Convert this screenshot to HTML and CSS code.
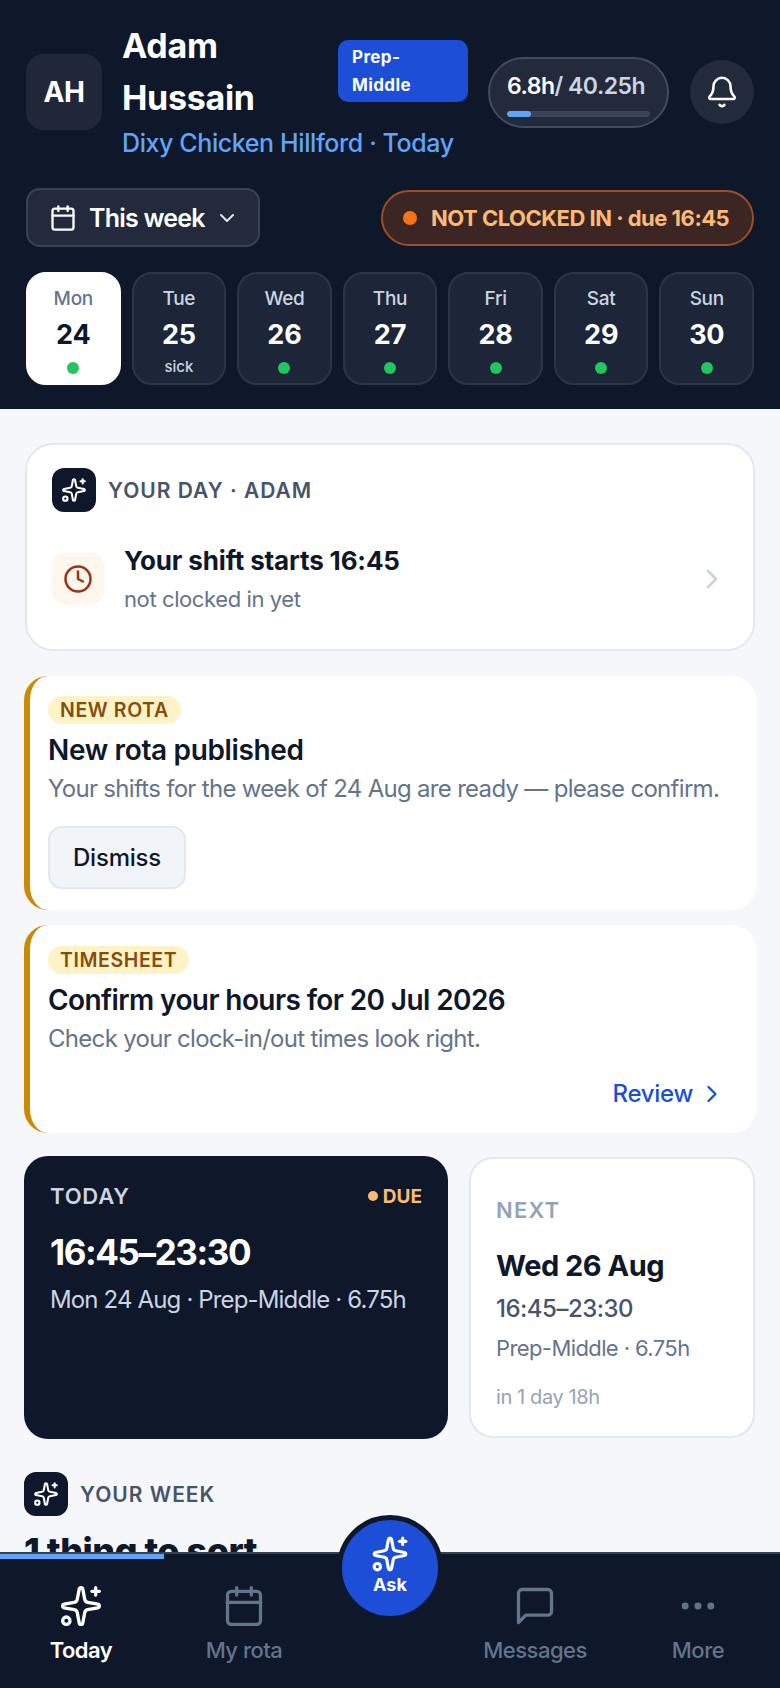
FILE: index.html
```html
<!DOCTYPE html>
<html lang="en">
<head>
  <meta charset="UTF-8">
  <meta name="viewport" content="width=device-width, initial-scale=1.0">
  <title>Today</title>
  <link rel="stylesheet" href="styles.css">
</head>
<body>

<svg class="defs" width="0" height="0" aria-hidden="true">
  <symbol id="i-sparkles" viewBox="0 0 24 24">
    <path d="M11.017 2.814a1 1 0 0 1 1.966 0l1.051 5.558a2 2 0 0 0 1.594 1.594l5.558 1.051a1 1 0 0 1 0 1.966l-5.558 1.051a2 2 0 0 0-1.594 1.594l-1.051 5.558a1 1 0 0 1-1.966 0l-1.051-5.558a2 2 0 0 0-1.594-1.594l-5.558-1.051a1 1 0 0 1 0-1.966l5.558-1.051a2 2 0 0 0 1.594-1.594z"/>
    <path d="M20 2v4"/><path d="M22 4h-4"/><circle cx="4" cy="20" r="2"/>
  </symbol>
  <symbol id="i-calendar" viewBox="0 0 24 24">
    <path d="M8 2v4"/><path d="M16 2v4"/><rect x="3" y="4" width="18" height="18" rx="2"/><path d="M3 10h18"/>
  </symbol>
  <symbol id="i-bell" viewBox="0 0 24 24">
    <path d="M10.268 21a2 2 0 0 0 3.464 0"/>
    <path d="M3.262 15.326A1 1 0 0 0 4 17h16a1 1 0 0 0 .74-1.673C19.41 13.956 18 12.499 18 8A6 6 0 0 0 6 8c0 4.499-1.411 5.956-2.738 7.326"/>
  </symbol>
  <symbol id="i-clock" viewBox="0 0 24 24"><circle cx="12" cy="12" r="10"/><path d="M12 6v6l4 2"/></symbol>
  <symbol id="i-down" viewBox="0 0 24 24"><path d="m6 9 6 6 6-6"/></symbol>
  <symbol id="i-right" viewBox="0 0 24 24"><path d="m9 18 6-6-6-6"/></symbol>
  <symbol id="i-message" viewBox="0 0 24 24"><path d="M21 15a2 2 0 0 1-2 2H7l-4 4V5a2 2 0 0 1 2-2h14a2 2 0 0 1 2 2z"/></symbol>
  <symbol id="i-more" viewBox="0 0 24 24"><circle cx="12" cy="12" r="1"/><circle cx="19" cy="12" r="1"/><circle cx="5" cy="12" r="1"/></symbol>
</svg>

<div class="app">
  <header class="top">
    <div class="top-row">
      <div class="avatar">AH</div>
      <div class="who">
        <div class="who-line">
          <div class="name">Adam Hussain</div>
          <div class="role">Prep-Middle</div>
        </div>
        <div class="place">Dixy Chicken Hillford · Today</div>
      </div>
      <div class="hours">
        <div class="hours-text"><b>6.8h</b>/ 40.25h</div>
        <div class="hours-bar"><div class="hours-fill" style="width: 17%"></div></div>
      </div>
      <div class="bell"><svg class="icon"><use href="#i-bell"/></svg></div>
    </div>

    <div class="filter-row">
      <button type="button" class="week-btn">
        <svg class="icon icon-cal"><use href="#i-calendar"/></svg>
        <span>This week</span>
        <svg class="icon icon-down"><use href="#i-down"/></svg>
      </button>
      <div class="clock-state"><span class="clock-dot"></span>NOT CLOCKED IN · due 16:45</div>
    </div>

    <div class="days">
      <div class="day active"><span class="day-name">Mon</span><span class="day-num">24</span><span class="dot"></span></div>
      <div class="day"><span class="day-name">Tue</span><span class="day-num">25</span><span class="day-note">sick</span></div>
      <div class="day"><span class="day-name">Wed</span><span class="day-num">26</span><span class="dot"></span></div>
      <div class="day"><span class="day-name">Thu</span><span class="day-num">27</span><span class="dot"></span></div>
      <div class="day"><span class="day-name">Fri</span><span class="day-num">28</span><span class="dot"></span></div>
      <div class="day"><span class="day-name">Sat</span><span class="day-num">29</span><span class="dot"></span></div>
      <div class="day"><span class="day-name">Sun</span><span class="day-num">30</span><span class="dot"></span></div>
    </div>
  </header>

  <main class="content">
    <section class="card day-card">
      <div class="ai-head">
        <div class="ai-tile"><svg class="icon"><use href="#i-sparkles"/></svg></div>
        <span class="ai-label">YOUR DAY · ADAM</span>
      </div>
      <div class="day-row">
        <div class="clock-tile"><svg class="icon"><use href="#i-clock"/></svg></div>
        <div class="day-row-text">
          <div class="day-row-title">Your shift starts 16:45</div>
          <div class="day-row-sub">not clocked in yet</div>
        </div>
        <svg class="icon icon-go"><use href="#i-right"/></svg>
      </div>
    </section>

    <section class="notice">
      <span class="tag">NEW ROTA</span>
      <h2 class="notice-title">New rota published</h2>
      <p class="notice-text">Your shifts for the week of 24 Aug are ready — please confirm.</p>
      <button type="button" class="dismiss">Dismiss</button>
    </section>

    <section class="notice notice-second">
      <span class="tag">TIMESHEET</span>
      <h2 class="notice-title">Confirm your hours for 20 Jul 2026</h2>
      <p class="notice-text">Check your clock-in/out times look right.</p>
      <a class="review">Review <svg class="icon"><use href="#i-right"/></svg></a>
    </section>

    <div class="shifts">
      <section class="shift-today">
        <div class="shift-head">
          <span class="shift-label">TODAY</span>
          <span class="due"><i></i>DUE</span>
        </div>
        <div class="shift-time">16:45–23:30</div>
        <div class="shift-meta">Mon 24 Aug · Prep-Middle · 6.75h</div>
      </section>
      <section class="card shift-next">
        <div class="next-label">NEXT</div>
        <div class="next-date">Wed 26 Aug</div>
        <div class="next-time">16:45–23:30</div>
        <div class="next-meta">Prep-Middle · 6.75h</div>
        <div class="next-in">in 1 day 18h</div>
      </section>
    </div>

    <section class="week">
      <div class="ai-head">
        <div class="ai-tile"><svg class="icon"><use href="#i-sparkles"/></svg></div>
        <span class="ai-label">YOUR WEEK</span>
      </div>
      <h2 class="week-title">1 thing to sort</h2>
    </section>
  </main>

  <nav class="tabbar">
    <div class="tabbar-progress"></div>
    <a class="tab current"><svg class="icon"><use href="#i-sparkles"/></svg><span>Today</span></a>
    <a class="tab"><svg class="icon"><use href="#i-calendar"/></svg><span>My rota</span></a>
    <div class="tab-gap"></div>
    <a class="tab"><svg class="icon"><use href="#i-message"/></svg><span>Messages</span></a>
    <a class="tab"><svg class="icon"><use href="#i-more"/></svg><span>More</span></a>
    <button type="button" class="ask">
      <svg class="icon"><use href="#i-sparkles"/></svg>
      <span>Ask</span>
    </button>
  </nav>
</div>

</body>
</html>
```

FILE: styles.css
```css
* {
  box-sizing: border-box;
}

body {
  margin: 0;
  font-family: Inter, "Open Sans", sans-serif;
  background-color: #f5f7fb;
  color: #0f172a;
}

button {
  font-family: inherit;
}

.defs {
  position: absolute;
}

.icon {
  display: block;
  fill: none;
  stroke: currentColor;
  stroke-width: 2;
  stroke-linecap: round;
  stroke-linejoin: round;
}

.app {
  display: flex;
  flex-direction: column;
  height: 1688px;
  overflow: hidden;
}

/* header */
.top {
  flex: none;
  height: 409px;
  padding: 19px 26px 0;
  background-color: #0f172a;
  color: #fff;
}

.top-row {
  display: flex;
  align-items: center;
  gap: 20px;
}

.avatar {
  flex: none;
  display: flex;
  align-items: center;
  justify-content: center;
  width: 76px;
  height: 76px;
  margin-top: 4px;
  border-radius: 18px;
  background-color: #1f2738;
  font-size: 28px;
  font-weight: 700;
  letter-spacing: -0.5px;
}

.who {
  flex: 1;
  min-width: 0;
}

.who-line {
  display: flex;
  align-items: center;
}

.name {
  flex: 1;
  margin: 1px 0 -1px;
  padding-right: 60px;
  font-size: 34px;
  line-height: 52px;
  font-weight: 700;
  letter-spacing: -0.3px;
}

.role {
  flex: none;
  width: 130px;
  height: 62px;
  padding: 3px 30px 0 14px;
  border-radius: 10px;
  background-color: #1d4ed8;
  font-size: 17px;
  line-height: 28px;
  font-weight: 700;
  letter-spacing: 0.4px;
}

.place {
  margin-top: 2px;
  font-size: 25px;
  line-height: 36px;
  font-weight: 500;
  letter-spacing: -0.4px;
  color: #60a5fa;
  white-space: nowrap;
}

.hours {
  flex: none;
  width: 181px;
  height: 71px;
  margin-top: 4px;
  padding: 12px 17px 0;
  border: 2px solid #434c5c;
  border-radius: 36px;
  background-color: #222a3b;
}

.hours-text {
  font-size: 23px;
  line-height: 30px;
  font-weight: 600;
  letter-spacing: -0.5px;
  color: #cbd5e1;
  white-space: nowrap;
}

.hours-text b {
  font-weight: 600;
  color: #fff;
}

.hours-bar {
  height: 6px;
  margin-top: 10px;
  border-radius: 3px;
  background-color: #3a4456;
  overflow: hidden;
}

.hours-fill {
  height: 100%;
  border-radius: 3px;
  background-color: #60a5fa;
}

.bell {
  flex: none;
  display: flex;
  align-items: center;
  justify-content: center;
  width: 64px;
  height: 64px;
  margin-top: 4px;
  margin-left: 1px;
  border-radius: 50%;
  background-color: #222a3b;
}

.bell .icon {
  width: 34px;
  height: 34px;
  stroke-width: 1.8;
}

.filter-row {
  display: flex;
  align-items: center;
  justify-content: space-between;
  margin-top: 27px;
}

.week-btn {
  display: flex;
  align-items: center;
  width: 234px;
  height: 59px;
  padding: 0 0 0 21px;
  border: 2px solid #3a4352;
  border-radius: 14px;
  background-color: #222a3b;
  color: #fff;
  font-size: 25px;
  font-weight: 600;
  letter-spacing: -0.8px;
}

.icon-cal {
  width: 28px;
  height: 28px;
  margin-right: 12px;
}

.icon-down {
  width: 24px;
  height: 24px;
  margin-left: 10px;
  color: #e2e8f0;
}

.clock-state {
  display: flex;
  align-items: center;
  width: 373px;
  height: 56px;
  padding-left: 20px;
  border: 2px solid #9a4f24;
  border-radius: 28px;
  background-color: #3b2624;
  color: #fdba74;
  font-size: 22px;
  font-weight: 700;
  letter-spacing: -0.5px;
  white-space: nowrap;
}

.clock-dot {
  width: 14px;
  height: 14px;
  margin-right: 14px;
  border-radius: 50%;
  background-color: #f97316;
}

.days {
  display: flex;
  gap: 11px;
  margin-top: 25px;
}

.day {
  flex: 1;
  display: flex;
  flex-direction: column;
  align-items: center;
  height: 113px;
  padding-top: 12px;
  border: 2px solid #2c3547;
  border-radius: 20px;
  background-color: #1d2538;
  text-align: center;
}

.day-name {
  font-size: 19px;
  line-height: 26px;
  font-weight: 500;
  letter-spacing: -0.3px;
  color: #cbd5e1;
}

.day-num {
  margin-top: 5px;
  font-size: 27px;
  line-height: 36px;
  font-weight: 700;
  letter-spacing: -0.2px;
}

.dot {
  width: 12px;
  height: 12px;
  margin-top: 9px;
  border-radius: 50%;
  background-color: #22c55e;
}

.day-note {
  margin-top: 4px;
  font-size: 15px;
  line-height: 20px;
  font-weight: 500;
  color: #cbd5e1;
}

.day.active {
  border-color: #fff;
  background-color: #fff;
  color: #0f172a;
}

.day.active .day-name {
  color: #64748b;
}

/* body */
.content {
  flex: 1;
  min-height: 0;
  padding: 34px 24px 0;
  overflow: hidden;
}

.card {
  border: 2px solid #e2e8f0;
  background-color: #fff;
}

.day-card {
  height: 208px;
  margin: 0 1px;
  padding: 23px 25px 0;
  border-radius: 28px;
}

.ai-head {
  display: flex;
  align-items: center;
  gap: 12px;
}

.ai-tile {
  flex: none;
  display: flex;
  align-items: center;
  justify-content: center;
  width: 44px;
  height: 44px;
  border-radius: 12px;
  background-color: #0f172a;
  color: #fff;
}

.ai-tile .icon {
  width: 26px;
  height: 26px;
  stroke-width: 1.9;
}

.ai-label {
  font-size: 21px;
  font-weight: 600;
  letter-spacing: 1px;
  color: #475569;
}

.day-row {
  display: flex;
  align-items: center;
  margin-top: 31px;
}

.clock-tile {
  flex: none;
  display: flex;
  align-items: center;
  justify-content: center;
  width: 52px;
  height: 52px;
  margin-right: 20px;
  border-radius: 14px;
  background-color: #fff7ed;
  color: #9a3412;
}

.clock-tile .icon {
  width: 30px;
  height: 30px;
}

.day-row-title {
  font-size: 26px;
  line-height: 36px;
  font-weight: 700;
  letter-spacing: -0.15px;
}

.day-row-text {
  flex: 1;
}

.day-row-sub {
  margin-top: 4px;
  font-size: 22px;
  line-height: 32px;
  letter-spacing: -0.4px;
  color: #64748b;
}

.icon-go {
  flex: none;
  width: 32px;
  height: 32px;
  color: #cbd5e1;
}

.notice {
  height: 234px;
  margin-top: 25px;
  padding: 20px 30px 0 18px;
  border-left: 6px solid #ca8a04;
  border-radius: 24px;
  background-color: #fff;
}

.notice-second {
  height: 208px;
  margin-top: 15px;
  padding-top: 21px;
}

.tag {
  display: block;
  width: fit-content;
  height: 28px;
  padding: 0 12px;
  border-radius: 14px;
  background-color: #fef3c7;
  color: #854d0e;
  font-size: 19.5px;
  line-height: 28px;
  font-weight: 600;
  letter-spacing: 0.6px;
}

.notice-title {
  margin: 8px 0 0;
  font-size: 28px;
  line-height: 36px;
  font-weight: 600;
  letter-spacing: -0.35px;
}

.notice-second .notice-title {
  letter-spacing: -0.6px;
}

.notice-text {
  margin: 4px 0 0;
  font-size: 24px;
  line-height: 34px;
  letter-spacing: -0.7px;
  color: #64748b;
  white-space: nowrap;
}

.dismiss {
  display: block;
  width: 138px;
  height: 63px;
  margin-top: 20px;
  border: 2px solid #e2e8f0;
  border-radius: 14px;
  background-color: #f1f5f9;
  color: #0f172a;
  font-size: 24px;
  font-weight: 500;
  letter-spacing: -0.2px;
}

.review {
  display: flex;
  align-items: center;
  justify-content: flex-end;
  gap: 5px;
  margin-top: 20px;
  color: #1d4ed8;
  font-size: 24px;
  line-height: 36px;
  font-weight: 500;
  letter-spacing: -0.3px;
}

.review .icon {
  width: 28px;
  height: 28px;
}

.shifts {
  display: grid;
  grid-template-columns: 424px 1fr;
  gap: 21px;
  margin-top: 23px;
}

.shift-today {
  height: 283px;
  padding: 26px 26px 0;
  border-radius: 24px;
  background-color: #0f172a;
  color: #fff;
}

.shift-head {
  display: flex;
  align-items: center;
  justify-content: space-between;
}

.shift-label {
  font-size: 22px;
  line-height: 28px;
  font-weight: 600;
  letter-spacing: 0.8px;
  color: #cbd5e1;
}

.due {
  display: flex;
  align-items: center;
  gap: 5px;
  font-size: 19px;
  font-weight: 700;
  color: #fdba74;
}

.due i {
  width: 10px;
  height: 10px;
  border-radius: 50%;
  background-color: #fdba74;
}

.shift-time {
  margin-top: 20px;
  font-size: 35px;
  line-height: 44px;
  font-weight: 700;
  letter-spacing: -1.4px;
}

.shift-meta {
  margin-top: 9px;
  font-size: 24px;
  line-height: 34px;
  letter-spacing: -0.85px;
  color: #cbd5e1;
}

.shift-next {
  height: 281px;
  margin: 1px 1px 0 0;
  padding: 37px 20px 0 25px;
  border-radius: 24px;
}

.next-label {
  font-size: 22px;
  line-height: 28px;
  font-weight: 600;
  letter-spacing: 1.2px;
  color: #94a3b8;
}

.next-date {
  margin-top: 22px;
  font-size: 29px;
  line-height: 40px;
  font-weight: 700;
  letter-spacing: -0.5px;
}

.next-time {
  margin-top: 6px;
  font-size: 24px;
  line-height: 34px;
  font-weight: 500;
  letter-spacing: -0.5px;
  color: #475569;
}

.next-meta {
  margin-top: 6px;
  font-size: 22px;
  line-height: 32px;
  letter-spacing: -0.6px;
  color: #64748b;
}

.next-in {
  margin-top: 19px;
  font-size: 20px;
  line-height: 28px;
  letter-spacing: -0.4px;
  color: #94a3b8;
}

.week {
  margin-top: 33px;
}

.week-title {
  margin: 13px 0 0;
  font-size: 36px;
  line-height: 44px;
  font-weight: 800;
  letter-spacing: -0.5px;
}

/* bottom nav */
.tabbar {
  position: relative;
  flex: none;
  display: grid;
  grid-template-columns: 162px 164px 128px 162px 164px;
  height: 136px;
  padding-top: 30px;
  border-top: 2px solid #334155;
  background-color: #0f172a;
}

.tabbar-progress {
  position: absolute;
  top: 0;
  left: 0;
  width: 164px;
  height: 5px;
  background-color: #60a5fa;
}

.tab {
  display: flex;
  flex-direction: column;
  align-items: center;
  color: #64748b;
  font-size: 22px;
  line-height: 30px;
  font-weight: 500;
  letter-spacing: -0.5px;
}

.tab .icon {
  width: 44px;
  height: 44px;
  margin-bottom: 7px;
  stroke-width: 1.8;
}

.tab.current {
  color: #fff;
  font-weight: 600;
}

.ask {
  position: absolute;
  top: -39px;
  left: 337px;
  display: flex;
  flex-direction: column;
  align-items: center;
  width: 106px;
  height: 106px;
  padding: 15px 0 0;
  border: 5px solid #0f172a;
  border-radius: 50%;
  background-color: #1d4ed8;
  color: #fff;
  font-size: 18px;
  line-height: 22px;
  font-weight: 700;
}

.ask .icon {
  width: 38px;
  height: 38px;
  margin-bottom: 1px;
  stroke-width: 2;
}
```
